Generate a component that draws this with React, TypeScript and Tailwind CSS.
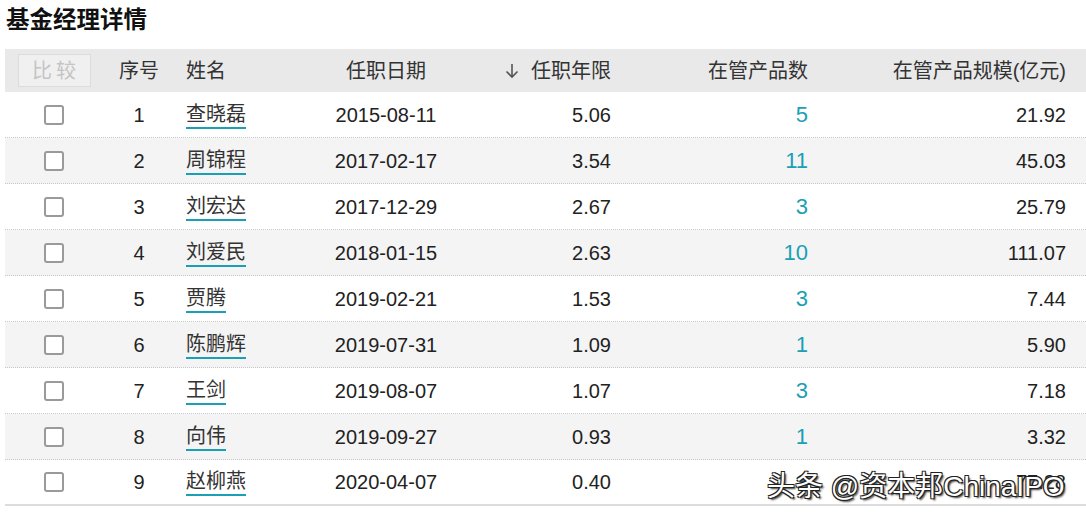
import React from 'react';

interface Manager {
  no: number;
  name: string;
  start: string;
  years: string;
  count: number;
  scale: string;
}

const managers: Manager[] = [
  { no: 1, name: '查晓磊', start: '2015-08-11', years: '5.06', count: 5, scale: '21.92' },
  { no: 2, name: '周锦程', start: '2017-02-17', years: '3.54', count: 11, scale: '45.03' },
  { no: 3, name: '刘宏达', start: '2017-12-29', years: '2.67', count: 3, scale: '25.79' },
  { no: 4, name: '刘爱民', start: '2018-01-15', years: '2.63', count: 10, scale: '111.07' },
  { no: 5, name: '贾腾', start: '2019-02-21', years: '1.53', count: 3, scale: '7.44' },
  { no: 6, name: '陈鹏辉', start: '2019-07-31', years: '1.09', count: 1, scale: '5.90' },
  { no: 7, name: '王剑', start: '2019-08-07', years: '1.07', count: 3, scale: '7.18' },
  { no: 8, name: '向伟', start: '2019-09-27', years: '0.93', count: 1, scale: '3.32' },
  { no: 9, name: '赵柳燕', start: '2020-04-07', years: '0.40', count: 3, scale: '77.28' },
];

// column widths, shared by header and rows
const cols = 'grid grid-cols-[98px_72px_125px_172px_149px_197px_260px]';

const SortDown = () => (
  <svg width="14" height="16" viewBox="0 0 14 16" className="inline-block mr-[12px] align-[-1px]">
    <path d="M7 1v13M1.5 8.5L7 14l5.5-5.5" fill="none" stroke="#555" strokeWidth="1.6" />
  </svg>
);

export default function App() {
  return (
    <div
      className="relative w-[1086px] h-[524px] bg-white overflow-hidden text-[#222]"
      style={{ fontFamily: '"Liberation Sans", "Noto Sans CJK SC", sans-serif' }}
    >
      <h1 className="pl-[6px] pt-[5px] h-[49px] text-[23.5px] font-bold leading-[30px] text-[#111]">
        基金经理详情
      </h1>

      <div className="ml-[5px] w-[1081px]">
        {/* header */}
        <div className={`${cols} h-[43px] items-center bg-[#e9e9e9] text-[20px] text-[#333]`}>
          <div className="flex justify-center">
            <span className="w-[73px] h-[33px] flex items-center justify-center bg-[#f0f0f0] border border-[#dcdcdc] text-[#c4c4c4] tracking-[4px] pl-[4px]">
              比较
            </span>
          </div>
          <div className="text-center">序号</div>
          <div className="pl-[11px]">姓名</div>
          <div className="text-center">任职日期</div>
          <div className="text-right pr-[10px]">
            <SortDown />
            任职年限
          </div>
          <div className="text-right pr-[10px]">在管产品数</div>
          <div className="text-right pr-[12px]">在管产品规模(亿元)</div>
        </div>

        {/* rows */}
        {managers.map((m, i) => (
          <div
            key={m.no}
            className={`${cols} h-[46px] items-center text-[20px] ${
              i === managers.length - 1
                ? 'border-b-2 border-solid border-[#dcdcdc]'
                : 'border-b border-dotted border-[#c8c8c8]'
            } ${i % 2 === 1 ? 'bg-[#f4f4f4]' : 'bg-white'}`}
          >
            <div className="flex justify-center">
              <span className="w-[20px] h-[20px] rounded-[3px] border-2 border-[#9a9a9a] bg-white" />
            </div>
            <div className="text-center">{m.no}</div>
            <div className="pl-[11px] flex">
              <span className="leading-[26px] text-[#333] border-b-2 border-[#1a9fb5]">{m.name}</span>
            </div>
            <div className="text-center">{m.start}</div>
            <div className="text-right pr-[10px]">{m.years}</div>
            <div className="text-right pr-[10px] text-[22px] text-[#1a9fb5]">{m.count}</div>
            <div className="text-right pr-[12px]">{m.scale}</div>
          </div>
        ))}
      </div>

      {/* watermark overlay */}
      <div
        className="absolute left-[767px] top-[470px] text-[28px] leading-[34px] text-white whitespace-nowrap"
        style={{
          textShadow:
            '1px 1px 0 #222, -1px -1px 0 #222, 1px -1px 0 #222, -1px 1px 0 #222, 2px 2px 2px #333',
        }}
      >
        头条 @资本邦ChinaIPO
      </div>
    </div>
  );
}
